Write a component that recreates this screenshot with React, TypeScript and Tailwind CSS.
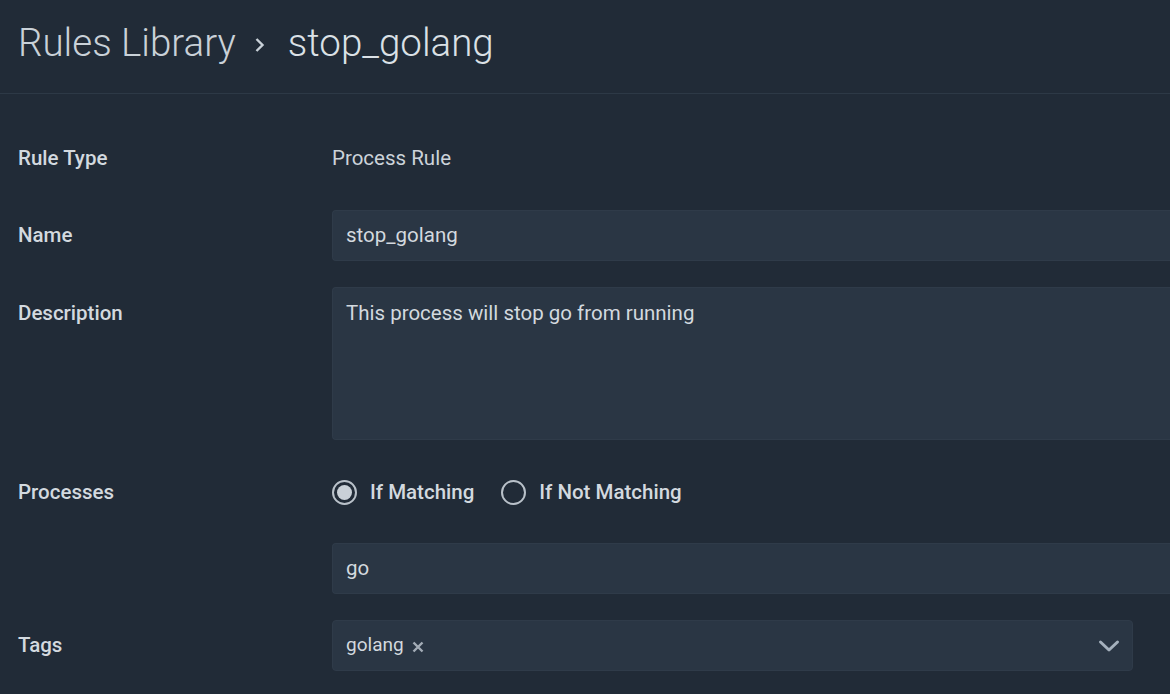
import React from "react";

const font = { fontFamily: "Roboto, 'Noto Sans', sans-serif" };

function Label({ children }: { children: React.ReactNode }) {
  return (
    <div className="w-[332px] shrink-0 pl-[18px] text-[20.5px] font-medium text-[#d3d9df]">
      {children}
    </div>
  );
}

function Radio({ checked, label }: { checked: boolean; label: string }) {
  return (
    <div className="flex items-center gap-[13px]">
      <span className="flex h-[25px] w-[25px] items-center justify-center rounded-full border-2 border-[#b9c1c9]">
        {checked && <span className="h-[15px] w-[15px] rounded-full bg-[#c9d0d7]" />}
      </span>
      <span className="text-[20.5px] font-medium text-[#d3d9df]">{label}</span>
    </div>
  );
}

export default function App() {
  return (
    <div className="min-h-[694px] w-[1170px] overflow-hidden bg-[#212b37]" style={font}>
      <div className="flex h-[94px] items-center border-b border-[#2d3946] pl-[18px] pb-[8px]">
        <span className="text-[38.5px] font-light text-[#c9d1d8]">Rules Library</span>
        <svg width="14" height="18" viewBox="0 0 14 18" className="ml-[17px] mr-[21px] mt-[4px]">
          <path d="M3.5 3 L9.5 9 L3.5 15" fill="none" stroke="#c9d1d8" strokeWidth="2.4" />
        </svg>
        <span className="text-[38.5px] font-light text-[#dbe1e6]">stop_golang</span>
      </div>

      <div className="flex flex-col">
        <div className="mt-[51px] flex h-[26px] items-center">
          <Label>Rule Type</Label>
          <span className="text-[20.5px] text-[#ccd3da]">Process Rule</span>
        </div>

        <div className="mt-[39px] flex items-center">
          <Label>Name</Label>
          <div className="flex h-[51px] flex-1 items-center rounded-l-[4px] border border-r-0 border-[#2f3b49] bg-[#2a3644] pl-[13px] text-[20.5px] text-[#d3d9df]">
            stop_golang
          </div>
        </div>

        <div className="mt-[26px] flex items-start">
          <div className="pt-[11px]">
            <Label>Description</Label>
          </div>
          <div className="h-[153px] flex-1 rounded-l-[4px] border border-r-0 border-[#2f3b49] bg-[#2a3644] pl-[13px] pt-[10px] text-[20.5px] text-[#d3d9df]">
            This process will stop go from running
          </div>
        </div>

        <div className="mt-[39px] flex h-[27px] items-center">
          <Label>Processes</Label>
          <div className="flex items-center gap-[27px]">
            <Radio checked label="If Matching" />
            <Radio checked={false} label="If Not Matching" />
          </div>
        </div>

        <div className="mt-[37px] flex items-center">
          <div className="w-[332px] shrink-0" />
          <div className="flex h-[51px] flex-1 items-center rounded-l-[4px] border border-r-0 border-[#2f3b49] bg-[#2a3644] pl-[13px] text-[20.5px] text-[#d3d9df]">
            go
          </div>
        </div>

        <div className="mt-[26px] flex items-center">
          <Label>Tags</Label>
          <div className="mr-[37px] flex h-[51px] flex-1 items-center justify-between rounded-[4px] border border-[#2f3b49] bg-[#2a3644] pl-[13px] pr-[12px]">
            <div className="flex items-center gap-[8px] text-[19px] text-[#d3d9df]">
              <span>golang</span>
              <svg width="12" height="12" viewBox="0 0 12 12" className="mt-[2px]">
                <path d="M1.5 1.5 L10.5 10.5 M10.5 1.5 L1.5 10.5" stroke="#a3acb6" strokeWidth="2.4" />
              </svg>
            </div>
            <svg width="22" height="14" viewBox="0 0 22 14">
              <path d="M2.5 3 L11 11 L19.5 3" fill="none" stroke="#a5b1bd" strokeWidth="3" strokeLinecap="round" strokeLinejoin="round" />
            </svg>
          </div>
        </div>
      </div>
    </div>
  );
}
